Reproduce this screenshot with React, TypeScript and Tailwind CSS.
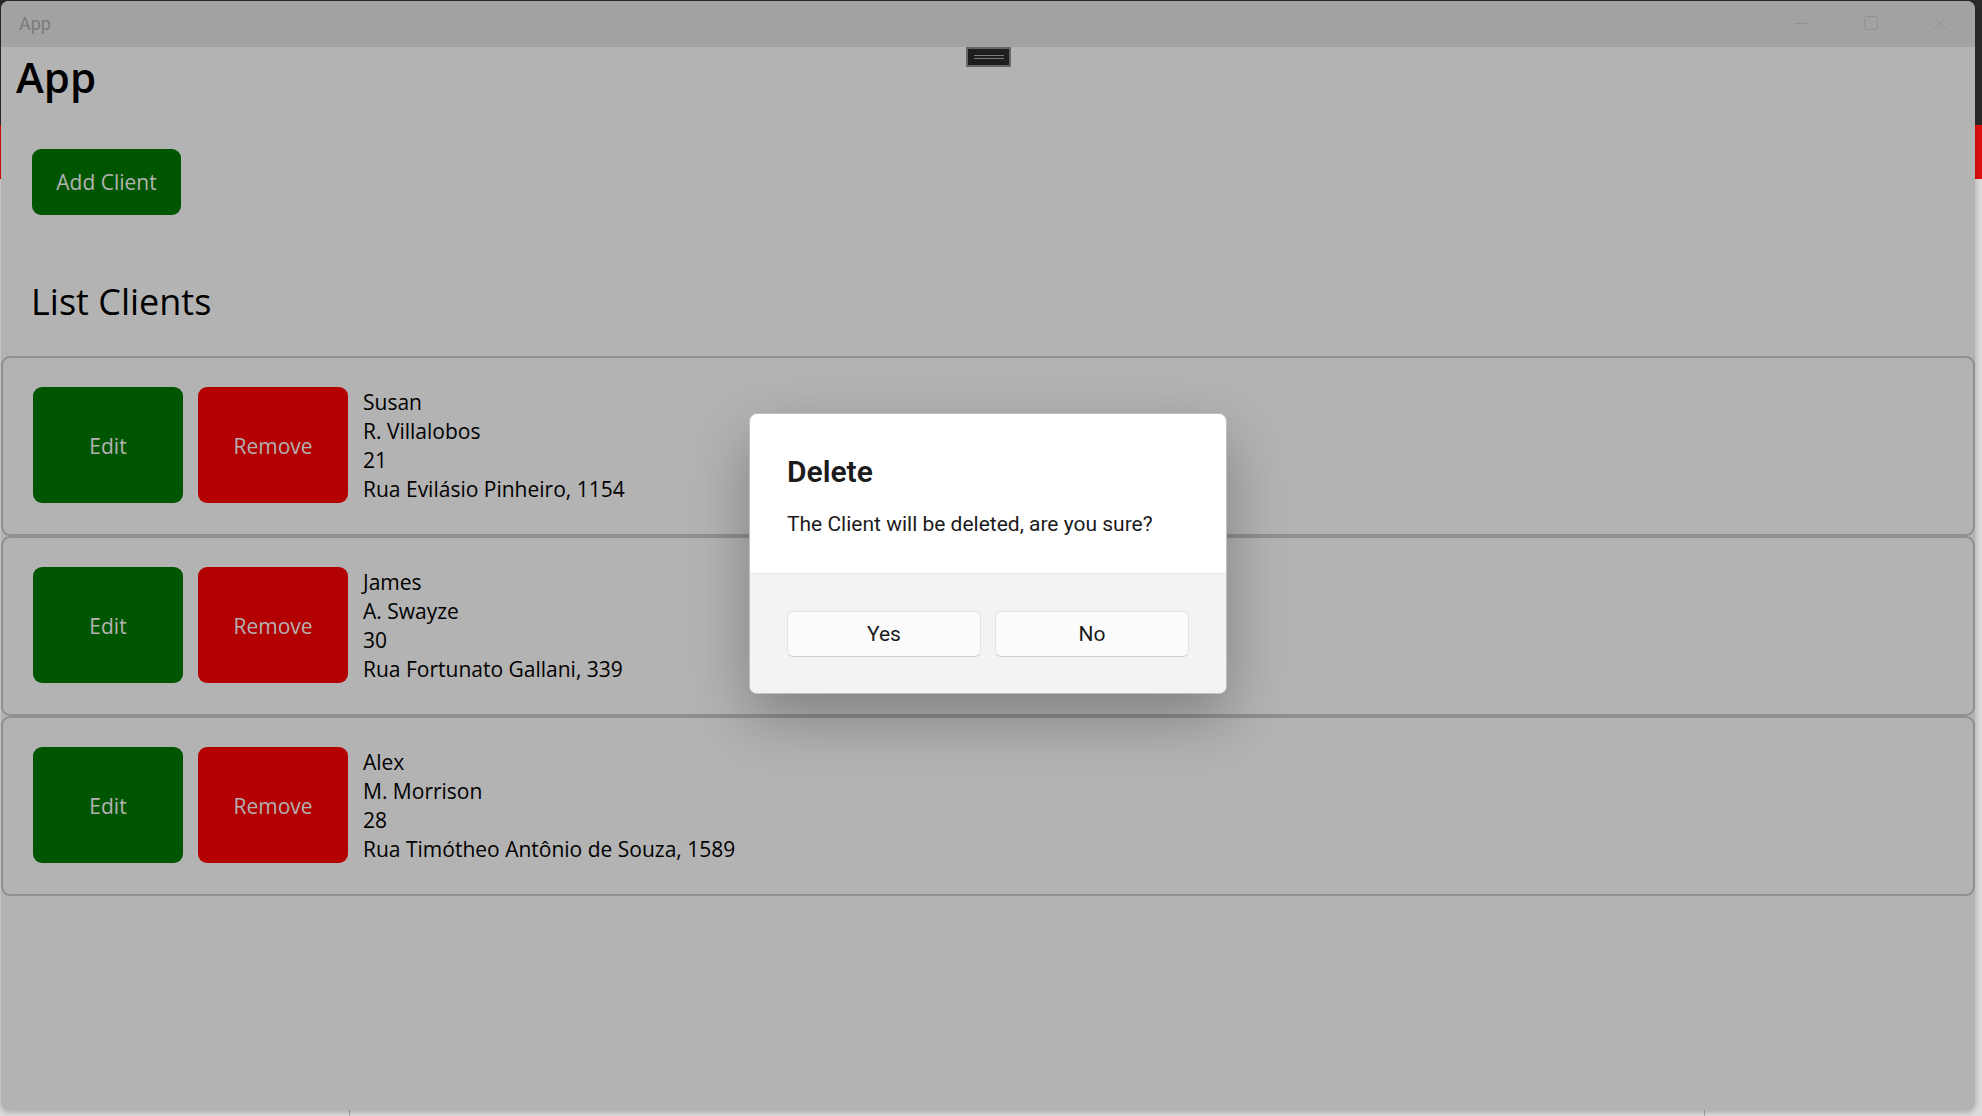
const clients = [
  { name: "Susan", last: "R. Villalobos", age: "21", address: "Rua Evilásio Pinheiro, 1154" },
  { name: "James", last: "A. Swayze", age: "30", address: "Rua Fortunato Gallani, 339" },
  { name: "Alex", last: "M. Morrison", age: "28", address: "Rua Timótheo Antônio de Souza, 1589" },
];

function TitleBar() {
  return (
    <div className="relative h-[46px] shrink-0 bg-[#a2a2a2]">
      <span className="absolute left-[18px] top-[12px] text-[18px] leading-[22px] text-[#7a7a7a] [font-family:Roboto,sans-serif]">
        App
      </span>
      {/* window controls */}
      <div className="absolute right-0 top-0 flex h-[46px] items-center">
        <svg width="16" height="16" viewBox="0 0 16 16" className="absolute left-[-181px] top-[14px]">
          <line x1="1" y1="8.5" x2="15" y2="8.5" stroke="#929292" strokeWidth="1" />
        </svg>
        <svg width="16" height="16" viewBox="0 0 16 16" className="absolute left-[-112px] top-[14px]">
          <rect x="1.5" y="1.5" width="13" height="13" rx="2.5" fill="none" stroke="#929292" strokeWidth="1" />
        </svg>
        <svg width="16" height="16" viewBox="0 0 16 16" className="absolute left-[-43px] top-[14px]">
          <path d="M1.5 1.5 L14.5 14.5 M14.5 1.5 L1.5 14.5" stroke="#929292" strokeWidth="1" />
        </svg>
      </div>
      {/* live preview toolbar handle */}
      <div className="absolute left-[965px] top-[46px] z-10 flex h-[20px] w-[45px] flex-col items-center justify-center gap-[2px] border-2 border-[#666666] bg-[#1e1e1e]">
        <div className="h-[1px] w-[30px] bg-[#7a7a7a]" />
        <div className="h-[1px] w-[30px] bg-[#7a7a7a]" />
      </div>
    </div>
  );
}

function ClientCard({ c }: { c: (typeof clients)[number] }) {
  return (
    <div className="flex gap-[15px] rounded-[9px] border-2 border-[#8f8f8f] px-[30px] pt-[29px] pb-[30px]">
      <button className="flex h-[116px] w-[150px] items-center justify-center rounded-[9px] bg-[#005500] pt-[4px] text-[21px] text-[#b3b3b3]">
        Edit
      </button>
      <button className="flex h-[116px] w-[150px] items-center justify-center rounded-[9px] bg-[#b30000] pt-[4px] text-[21px] text-[#b3b3b3]">
        Remove
      </button>
      <div className="flex flex-col pt-[1px] text-[21px] leading-[29px] text-black">
        <span>{c.name}</span>
        <span>{c.last}</span>
        <span>{c.age}</span>
        <span>{c.address}</span>
      </div>
    </div>
  );
}

function DeleteDialog() {
  return (
    <div className="absolute left-[749px] top-[413px] z-20 flex w-[478px] flex-col overflow-hidden rounded-[8px] border border-black/25 bg-white shadow-[0_24px_60px_rgba(0,0,0,0.28)] [font-family:Roboto,sans-serif]">
      <div className="flex h-[159px] flex-col px-[37px] pt-[39px]">
        <h3 className="text-[30px] font-semibold leading-[38px] text-[#1b1b1b]">Delete</h3>
        <p className="mt-[19px] text-[21px] leading-[28px] text-[#1b1b1b]">
          The Client will be deleted, are you sure?
        </p>
      </div>
      <div className="grid grid-cols-2 gap-[14px] border-t border-[#e5e5e5] bg-[#f3f3f3] px-[37px] pt-[37px] pb-[36px]">
        <button className="h-[46px] rounded-[6px] border border-[#e3e3e3] border-b-[#cfcfcf] bg-[#fbfbfb] pt-[2px] text-[21px] text-[#1b1b1b]">
          Yes
        </button>
        <button className="h-[46px] rounded-[6px] border border-[#e3e3e3] border-b-[#cfcfcf] bg-[#fbfbfb] pt-[2px] text-[21px] text-[#1b1b1b]">
          No
        </button>
      </div>
    </div>
  );
}

export default function App() {
  return (
    <div className="relative h-[1116px] w-[1982px] overflow-hidden bg-[#dcdcdc] [font-family:'Open_Sans',sans-serif]">
      {/* desktop behind the window */}
      <div className="flex flex-col">
        <div className="h-[125px] bg-[#2b2b2b]" />
        <div className="h-[54px] bg-[#e01010]" />
      </div>
      <div className="absolute bottom-0 left-[349px] h-[6px] w-[1px] bg-[#a9a9a9]" />
      <div className="absolute bottom-0 left-[1704px] h-[6px] w-[1px] bg-[#a9a9a9]" />

      {/* app window */}
      <div className="absolute left-[1px] top-[1px] flex h-[1109px] w-[1974px] flex-col overflow-hidden rounded-[8px] bg-[#b3b3b3] shadow-[0_2px_6px_rgba(0,0,0,0.25)]">
        <TitleBar />
        <div className="flex flex-col">
          <h1 className="ml-[15px] mt-[1px] text-[42px] font-semibold leading-[57px] text-black">App</h1>
          <button className="ml-[31px] mt-[44px] h-[66px] w-[149px] rounded-[9px] bg-[#005500] pt-[2px] text-[21px] text-[#b3b3b3]">
            Add Client
          </button>
          <h2 className="ml-[30px] mt-[62px] text-[36px] leading-[50px] text-black">List Clients</h2>
          <div className="mt-[29px] flex flex-col">
            {clients.map((c) => (
              <ClientCard key={c.name} c={c} />
            ))}
          </div>
        </div>
      </div>

      <DeleteDialog />
    </div>
  );
}
